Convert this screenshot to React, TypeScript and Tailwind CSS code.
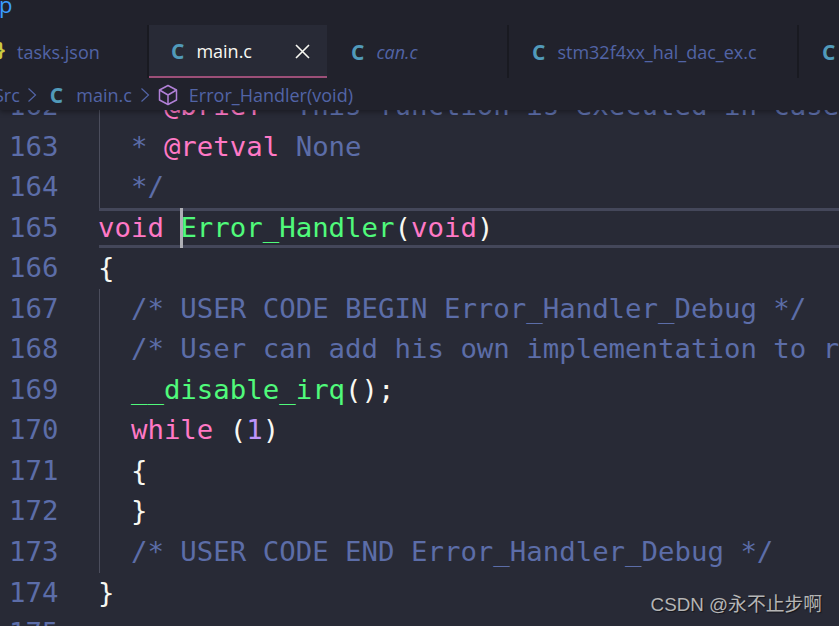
const ui = "font-['Open_Sans','Noto_Sans',sans-serif]";

function CIcon({ className = "" }: { className?: string }) {
  return <span className={`font-['Open_Sans',sans-serif] font-bold text-[#519aba] text-[21px] leading-none ${className}`}>C</span>;
}

function Cube() {
  return (
    <svg width="20" height="22" viewBox="0 0 20 22" fill="none" stroke="#b180d7" strokeWidth="1.5" strokeLinejoin="round" className="shrink-0">
      <path d="M10 1.500 18.500 6v10L10 20.500 1.500 16V6Z" />
      <path d="M1.500 6 10 11l8.500-5M10 11v9.500" />
    </svg>
  );
}

type Seg = [string, string?];
const cm = "text-[#5c6da8]";
const kw = "text-[#ff79c6]";
const fn = "text-[#50fa7b]";
const tx = "text-[#f8f8f2]";
const pu = "text-[#bd93f9]";

const lines: { n: number; guide?: boolean; segs: Seg[]; current?: boolean }[] = [
  { n: 162, guide: true, segs: [["  * ", cm], ["@brief", kw], ["  This function is executed in case of error occurrence.", cm]] },
  { n: 163, guide: true, segs: [["  * ", cm], ["@retval", kw], [" None", cm]] },
  { n: 164, guide: true, segs: [["  */", cm]] },
  { n: 165, current: true, segs: [["void", kw], [" ", tx], ["Error_Handler", fn], ["(", tx], ["void", kw], [")", tx]] },
  { n: 166, segs: [["{", tx]] },
  { n: 167, guide: true, segs: [["  /* USER CODE BEGIN Error_Handler_Debug */", cm]] },
  { n: 168, guide: true, segs: [["  /* User can add his own implementation to report the HAL error return state */", cm]] },
  { n: 169, guide: true, segs: [["  ", tx], ["__disable_irq", fn], ["();", tx]] },
  { n: 170, guide: true, segs: [["  ", tx], ["while", kw], [" (", tx], ["1", pu], [")", tx]] },
  { n: 171, guide: true, segs: [["  {", tx]] },
  { n: 172, guide: true, segs: [["  }", tx]] },
  { n: 173, guide: true, segs: [["  /* USER CODE END Error_Handler_Debug */", cm]] },
  { n: 174, segs: [["}", tx]] },
  { n: 175, segs: [] },
];

export default function App() {
  return (
    <div className="relative w-[839px] h-[626px] overflow-hidden bg-[#282a36] flex flex-col">
      <header className="relative z-10 shrink-0 h-[110px] bg-[#21222c] shadow-[0_2px_5px_rgba(0,0,0,0.35)] flex flex-col">
        <div className={`h-[25px] shrink-0 overflow-hidden text-[#3b9cff] text-[22px] leading-[16px] ${ui}`}>
          <span className="block -ml-[1px] -mt-[4px]">p</span>
        </div>
        <div className={`h-[53px] shrink-0 flex ${ui} text-[18px] text-[#5264a6]`}>
          <div className="w-[149px] shrink-0 flex items-center border-r-2 border-[#191a21] pl-[17px] pt-[2px] relative">
            <span className="absolute -left-[3px] top-[9px] text-[#cbcb41] font-bold text-[20px]">{"}"}</span>
            tasks.json
          </div>
          <div className="w-[178px] shrink-0 flex items-center bg-[#282a36] border-b-2 border-[#9c4f78] pl-[22px] pt-[2px] text-[#f8f8f2]">
            <CIcon />
            <span className="ml-[12px]">main.c</span>
            <svg width="15" height="15" viewBox="0 0 15 15" stroke="#f8f8f2" strokeWidth="1.6" className="ml-[43px]"><path d="M1 1l13 13M14 1 1 14" /></svg>
          </div>
          <div className="w-[182px] shrink-0 flex items-center border-r-2 border-[#191a21] pl-[24px] pt-[2px]">
            <CIcon />
            <span className="ml-[12px] italic">can.c</span>
          </div>
          <div className="w-[290px] shrink-0 flex items-center border-r-2 border-[#191a21] pl-[23px] pt-[2px]">
            <CIcon />
            <span className="ml-[12px]">stm32f4xx_hal_dac_ex.c</span>
          </div>
          <div className="flex items-center pl-[23px] pt-[2px]">
            <CIcon />
          </div>
        </div>
        <div className={`h-[32px] shrink-0 flex items-center pt-[2px] ${ui} text-[18px] text-[#5264a6]`}>
          <span className="-ml-[6px]">Src</span>
          <svg width="10" height="16" viewBox="0 0 10 16" fill="none" stroke="#5264a6" strokeWidth="1.2" className="ml-[7px]"><path d="M1.500 1.500 8.500 8 1.500 14.500" /></svg>
          <CIcon className="ml-[13px]" />
          <span className="ml-[13px]">main.c</span>
          <svg width="10" height="16" viewBox="0 0 10 16" fill="none" stroke="#5264a6" strokeWidth="1.2" className="ml-[8px] mr-[8px]"><path d="M1.500 1.500 8.500 8 1.500 14.500" /></svg>
          <Cube />
          <span className="ml-[11px]">Error_Handler(void)</span>
        </div>
      </header>

      <main className="-mt-[24px] flex-1 font-['DejaVu_Sans_Mono','Liberation_Mono',monospace] text-[27.36px]">
        {lines.map((l) => (
          <div key={l.n} className="flex h-[40.55px] leading-[40.55px]">
            <div className="w-[99px] shrink-0 pl-[9px] text-[#5c6da8]">{l.n}</div>
            <div
              className={`relative flex-1 whitespace-pre ${
                l.current ? "border-y-[3px] border-[#44475a] leading-[34.55px]" : ""
              } ${l.guide ? "border-l border-[#4b4d5c]" : ""}`}
            >
              {l.current && <span className="absolute left-[81px] -top-[3px] h-[40.55px] w-[3px] bg-[#aeafb5]" />}
              <span className={l.guide ? "-ml-[2px]" : "-ml-[1px]"}>
                {l.segs.map((s, i) => (
                  <span key={i} className={s[1]}>{s[0]}</span>
                ))}
              </span>
            </div>
          </div>
        ))}
      </main>

      <div className="absolute right-[17px] top-[593px] font-['Liberation_Sans','Noto_Sans_CJK_SC',sans-serif] text-[18.8px] leading-[24px] text-[#b5b5b5] [text-shadow:1px_1px_1px_rgba(0,0,0,0.5)]">
        CSDN @永不止步啊
      </div>
    </div>
  );
}
